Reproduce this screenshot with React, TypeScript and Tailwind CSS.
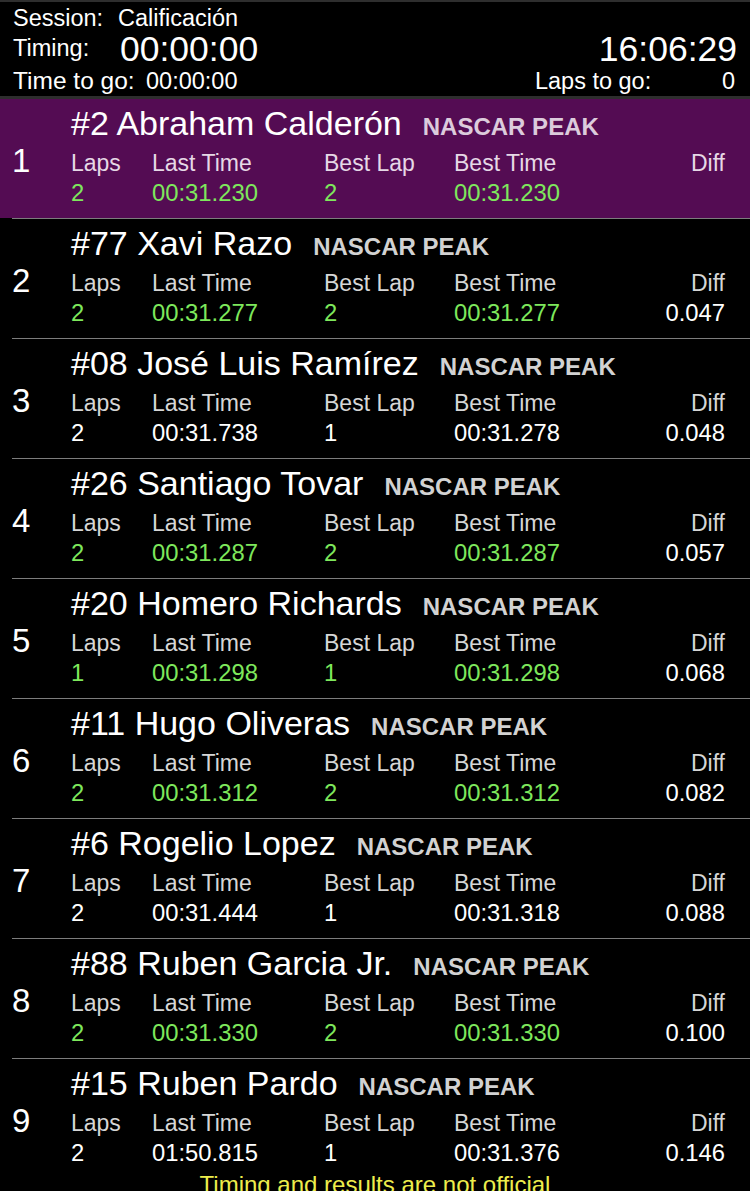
type Entry = {
  pos: number;
  name: string;
  laps: string;
  last: string;
  bestLap: string;
  best: string;
  diff: string;
  green: boolean;
};

const entries: Entry[] = [
  { pos: 1, name: "#2 Abraham Calderón", laps: "2", last: "00:31.230", bestLap: "2", best: "00:31.230", diff: "", green: true },
  { pos: 2, name: "#77 Xavi Razo", laps: "2", last: "00:31.277", bestLap: "2", best: "00:31.277", diff: "0.047", green: true },
  { pos: 3, name: "#08 José Luis Ramírez", laps: "2", last: "00:31.738", bestLap: "1", best: "00:31.278", diff: "0.048", green: false },
  { pos: 4, name: "#26 Santiago Tovar", laps: "2", last: "00:31.287", bestLap: "2", best: "00:31.287", diff: "0.057", green: true },
  { pos: 5, name: "#20 Homero Richards", laps: "1", last: "00:31.298", bestLap: "1", best: "00:31.298", diff: "0.068", green: true },
  { pos: 6, name: "#11 Hugo Oliveras", laps: "2", last: "00:31.312", bestLap: "2", best: "00:31.312", diff: "0.082", green: true },
  { pos: 7, name: "#6 Rogelio Lopez", laps: "2", last: "00:31.444", bestLap: "1", best: "00:31.318", diff: "0.088", green: false },
  { pos: 8, name: "#88 Ruben Garcia Jr.", laps: "2", last: "00:31.330", bestLap: "2", best: "00:31.330", diff: "0.100", green: true },
  { pos: 9, name: "#15 Ruben Pardo", laps: "2", last: "01:50.815", bestLap: "1", best: "00:31.376", diff: "0.146", green: false },
];

function Row({ e, last }: { e: Entry; last: boolean }) {
  const leader = e.pos === 1;
  const val = e.green ? "text-[#7ee85c]" : "text-white";
  return (
    <div>
      <div className={`flex h-[119px] items-center ${leader ? "bg-[#540c53]" : "bg-black"}`}>
        <div className="w-[71px] pl-[12px] pt-[3px] text-[33px] leading-none text-white">{e.pos}</div>
        <div className="flex flex-1 flex-col self-stretch pt-[5px] pr-[25px]">
          <div className="flex items-baseline gap-[21px] whitespace-nowrap">
            <span className="text-[34px] leading-[38px] text-white">{e.name}</span>
            <span className={`text-[24px] font-bold ${leader ? "text-[#dccbdc]" : "text-[#d2d2d2]"}`}>
              NASCAR PEAK
            </span>
          </div>
          <div
            className={`mt-[4px] grid grid-cols-[81px_172px_130px_1fr_80px] text-[23px] leading-[29px] ${
              leader ? "text-[#e6d8e6]" : "text-[#d6d6d6]"
            }`}
          >
            <span>Laps</span>
            <span>Last Time</span>
            <span>Best Lap</span>
            <span>Best Time</span>
            <span className="text-right">Diff</span>
          </div>
          <div className="grid grid-cols-[81px_172px_130px_1fr_80px] text-[23.8px] leading-[29px]">
            <span className={val}>{e.laps}</span>
            <span className={val}>{e.last}</span>
            <span className={val}>{e.bestLap}</span>
            <span className={val}>{e.best}</span>
            <span className="text-right text-white">{e.diff}</span>
          </div>
        </div>
      </div>
      {!last && <div className="ml-[12px] h-px bg-[#7c7c7c]" />}
    </div>
  );
}

export default function App() {
  return (
    <div
      className="h-[1191px] w-[750px] overflow-hidden bg-black text-white"
      style={{ fontFamily: '"Liberation Sans", Arial, sans-serif' }}
    >
      <div className="h-[99px] border-t-2 border-b-[3px] border-[#2e2e2e] px-[13px]">
        <div className="flex pt-[3px] text-[23.5px] leading-[26px]">
          <span className="w-[105px]">Session:</span>
          <span>Calificación</span>
        </div>
        <div className="flex items-center justify-between">
          <div className="flex items-center">
            <span className="w-[107px] text-[23.5px]">Timing:</span>
            <span className="text-[35.5px] leading-[36px]">00:00:00</span>
          </div>
          <span className="text-[35.5px] leading-[36px]">16:06:29</span>
        </div>
        <div className="flex justify-between pt-[1px] text-[23.5px] leading-[26px]">
          <div className="flex">
            <span className="w-[133px] text-[24.5px]">Time to go:</span>
            <span>00:00:00</span>
          </div>
          <div className="flex pr-[2px]">
            <span className="w-[187px]">Laps to go:</span>
            <span>0</span>
          </div>
        </div>
      </div>
      {entries.map((e, i) => (
        <Row key={e.pos} e={e} last={i === entries.length - 1} />
      ))}
      <div className="-mt-[6px] text-center text-[24px] leading-[26px] text-[#eded4c]">
        Timing and results are not official
      </div>
    </div>
  );
}
